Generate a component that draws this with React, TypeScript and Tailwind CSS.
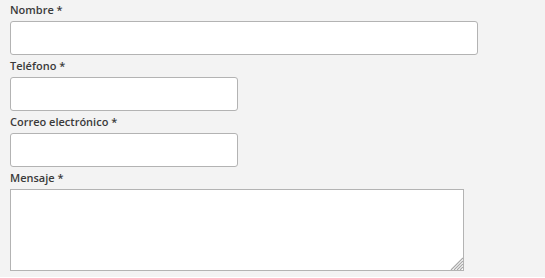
const labelCls =
	'block h-[22px] leading-[22px] text-[11px] font-semibold text-[#3a3a3a]';
const inputCls =
	'block h-[34px] bg-white border border-[#b3b3b3] rounded-[3px] outline-none';

function Field({ label, wide }: { label: string; wide?: boolean }) {
	return (
		<div>
			<label className={labelCls}>{label} *</label>
			<input type="text" className={`${inputCls} ${wide ? 'w-[468px]' : 'w-[228px]'}`} />
		</div>
	);
}

export default function App() {
	return (
		<div
			className="w-[545px] h-[278px] bg-[#f3f3f3] overflow-hidden px-[10px] -mt-px"
			style={{ fontFamily: '"Open Sans", "Noto Sans", sans-serif' }}
		>
			<Field label="Nombre" wide />
			<Field label="Teléfono" />
			<Field label="Correo electrónico" />
			<div>
				<label className={labelCls}>Mensaje *</label>
				<div className="relative w-[454px] h-[82px]">
					<textarea className="block w-full h-full bg-white border border-[#b3b3b3] resize-none outline-none" />
					<svg
						className="absolute right-[1px] bottom-[1px]"
						width="13"
						height="13"
						viewBox="0 0 13 13"
					>
						<g stroke="#a8a8a8" strokeWidth="1.2">
							<line x1="13" y1="1" x2="1" y2="13" />
							<line x1="13" y1="4" x2="4" y2="13" />
							<line x1="13" y1="7" x2="7" y2="13" />
							<line x1="13" y1="10" x2="10" y2="13" />
						</g>
					</svg>
				</div>
			</div>
		</div>
	);
}
